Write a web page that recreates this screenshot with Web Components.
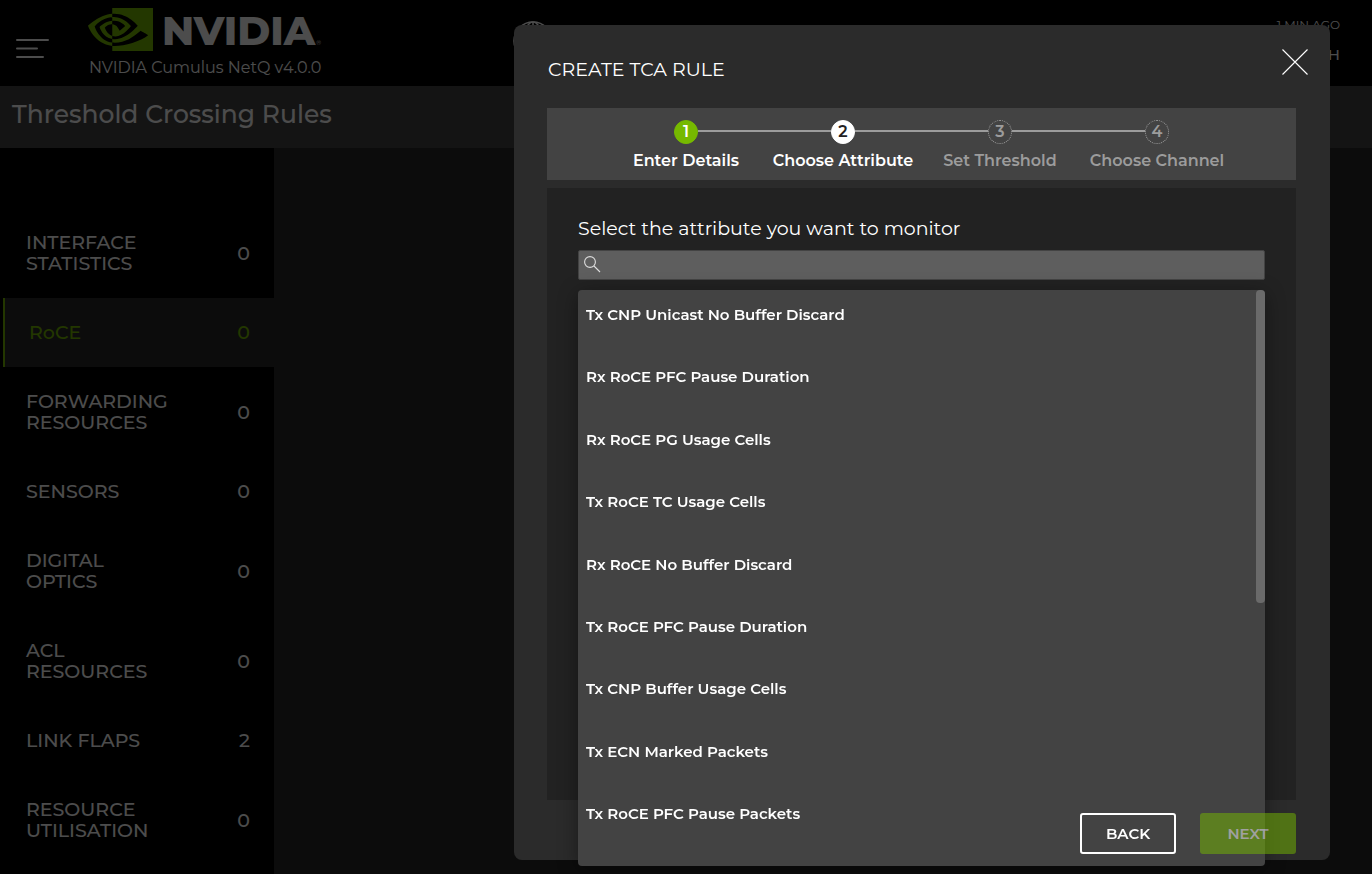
<!DOCTYPE html>
<html lang="en">
<head>
<meta charset="utf-8">
<title>NetQ - Threshold Crossing Rules</title>
<style>
html, body { height: 100%; margin: 0; }
body { background: #2b2b2b; color: #fff; font-family: Montserrat, Inter, sans-serif; overflow: hidden; }
</style>
</head>
<body>
<netq-app></netq-app>
<script>
const define = (name, html) => customElements.define(name, class extends HTMLElement {
  constructor() {
    super();
    this.attachShadow({ mode: 'open' });
  }
  connectedCallback() {
    if (this.shadowRoot.childNodes.length) return;
    this.shadowRoot.innerHTML = '<style>*{box-sizing:border-box}:host{box-sizing:border-box}</style>' + (typeof html === 'function' ? html(this) : html);
  }
});

define('netq-logo', `
<style>
:host { display: block; }
.mark { display: flex; align-items: center; gap: 9px; height: 43px; }
svg { width: 65px; height: 43px; flex: none; }
.word { font-size: 40px; line-height: 45px; font-weight: 800; padding-top: 1px; }
sup { font-size: 6px; font-weight: 400; line-height: 6px; align-self: flex-end; margin: 0 0 5px -8px; }
p { margin: 7px 0 0 1px; font-size: 16px; line-height: 20px; font-weight: 400; white-space: nowrap; }
</style>
<div class="mark">
<svg viewBox="0 4.063 24 15.874" preserveAspectRatio="none" fill="#76b900" aria-hidden="true"><path d="M8.948 8.798v-1.43a6.7 6.7 0 0 1 .424-.018c3.922-.124 6.493 3.374 6.493 3.374s-2.774 3.851-5.75 3.851c-.398 0-.787-.062-1.158-.185v-4.346c1.528.185 1.837.857 2.747 2.385l2.04-1.714s-1.492-1.952-4-1.952a6.016 6.016 0 0 0-.796.035m0-4.735v2.138l.424-.027c5.45-.185 9.01 4.47 9.01 4.47s-4.08 4.964-8.33 4.964c-.37 0-.733-.035-1.095-.097v1.325c.3.035.61.062.91.062 3.957 0 6.82-2.023 9.593-4.408.459.371 2.34 1.263 2.73 1.652-2.633 2.208-8.772 3.984-12.253 3.984-.335 0-.653-.018-.971-.053v1.864H24V4.063zm0 10.326v1.131c-3.657-.654-4.673-4.46-4.673-4.46s1.758-1.944 4.673-2.262v1.237H8.94c-1.528-.186-2.73 1.245-2.73 1.245s.68 2.412 2.739 3.11M2.456 10.9s2.164-3.197 6.5-3.533V6.201C4.153 6.59 0 10.653 0 10.653s2.35 6.802 8.948 7.42v-1.237c-4.84-.6-6.492-5.936-6.492-5.936z"/></svg>
<span class="word">NVIDIA</span><sup>®</sup>
</div>
<p><slot></slot></p>`);

define('netq-header', `
<style>
:host { display: flex; height: 86px; padding: 8px 32px 0 16px; background: #000; }
button { background: none; border: 0; padding: 0; margin: 0; color: inherit; font: inherit; }
.menu { width: 33px; height: 24px; margin: 28px 39px 0 0; }
svg { display: block; }
netq-logo { width: 232px; flex: none; }
.globe { margin: 13px 0 0 193px; flex: none; }
.status { margin-left: auto; display: flex; flex-direction: column; align-items: flex-end; }
.ago { font-size: 12px; line-height: 16px; font-weight: 400; margin-top: 9px; }
.status button { font-size: 15px; line-height: 20px; font-weight: 500; margin-top: 12px; }
</style>
<button class="menu" aria-label="Menu"><svg width="33" height="24" stroke="#fff" stroke-width="2" stroke-linecap="round"><path d="M1 4H32M1 12.500H21M1 21H27"/></svg></button>
<netq-logo>NVIDIA Cumulus NetQ v4.0.0</netq-logo>
<svg class="globe" width="40" height="40" fill="none" stroke="#fff" stroke-width="1.500" aria-hidden="true"><circle cx="20" cy="20" r="19"/><ellipse cx="20" cy="20" rx="9" ry="19"/><path d="M20 1V39M1 20H39M5 9C14 13 26 13 35 9M5 31C14 27 26 27 35 31"/></svg>
<div class="status"><span class="ago">1 MIN AGO</span><button>H</button></div>`);

define('netq-nav-item', host => `
<style>
:host { display: block; }
a { display: flex; align-items: center; justify-content: space-between; padding: 24px 24px 24px 26px; color: #fff; text-decoration: none; font-size: 19px; line-height: 21px; font-weight: 500; }
:host([active]) a { margin-left: 3px; padding-left: 24px; border-left: 2px solid #76b900; background: #2b2b2b; color: #76b900; }
</style>
<a href="#"><span><slot></slot></span><span>${host.getAttribute('count')}</span></a>`);

define('netq-sidebar', `
<style>:host { display: block; width: 274px; flex: none; padding-top: 60px; background: #000; }</style>
<nav aria-label="Rule categories">
<netq-nav-item count="0">INTERFACE<br>STATISTICS</netq-nav-item>
<netq-nav-item count="0" active>RoCE</netq-nav-item>
<netq-nav-item count="0">FORWARDING<br>RESOURCES</netq-nav-item>
<netq-nav-item count="0">SENSORS</netq-nav-item>
<netq-nav-item count="0">DIGITAL<br>OPTICS</netq-nav-item>
<netq-nav-item count="0">ACL<br>RESOURCES</netq-nav-item>
<netq-nav-item count="2">LINK FLAPS</netq-nav-item>
<netq-nav-item count="0">RESOURCE<br>UTILISATION</netq-nav-item>
</nav>`);

define('tca-step', host => `
<style>
:host { display: flex; flex-direction: column; align-items: center; flex: 1; color: #9c9c9c; font-weight: 600; white-space: nowrap; }
.track { display: flex; width: 100%; align-items: center; }
.track::before, .track::after { content: ""; flex: 1; height: 2px; margin-bottom: 2px; background: #9c9c9c; }
:host(:first-of-type) .track::before, :host(:last-of-type) .track::after { visibility: hidden; }
.dot { width: 24px; height: 24px; border-radius: 50%; border: 1px dotted #9c9c9c; display: grid; place-items: center; font-size: 16px; line-height: 22px; }
.label { margin-top: 7px; font-size: 16px; line-height: 20px; }
:host([state]) { color: #fff; }
:host([state=done]) .dot { background: #76b900; border-color: #76b900; border-style: solid; }
:host([state=current]) .dot { background: #fff; border-color: #fff; border-style: solid; color: #222; }
</style>
<div class="track"><span class="dot">${host.getAttribute('number')}</span></div>
<span class="label"><slot></slot></span>`);

define('tca-stepper', `
<style>
:host { display: flex; justify-content: center; height: 72px; padding-top: 12px; background: #434343; flex: none; }
.steps { display: flex; width: 628px; }
</style>
<div class="steps">
<tca-step number="1" state="done">Enter Details</tca-step>
<tca-step number="2" state="current">Choose Attribute</tca-step>
<tca-step number="3">Set Threshold</tca-step>
<tca-step number="4">Choose Channel</tca-step>
</div>`);

define('attribute-picker', `
<style>
:host { display: block; position: relative; }
label { display: block; font-size: 19px; line-height: 24px; padding-top: 1px; margin-bottom: 9px; }
.field { display: flex; align-items: center; gap: 6px; height: 30px; padding: 0 5px 2px; border: 1px solid #434343; border-radius: 2px; background: #5e5e5e; }
input { flex: 1; min-width: 0; border: 0; outline: 0; padding: 0; background: none; color: #fff; font: 500 15px/20px Montserrat, Inter, sans-serif; }
.menu { position: absolute; top: 74px; left: 0; right: 0; height: 576px; border-radius: 4px; background: #434343; box-shadow: 0 4px 20px rgba(0,0,0,.4); }
ul { list-style: none; margin: 0; padding: 16px 8px 43px; height: 100%; display: flex; flex-direction: column; justify-content: space-between; }
li { font-size: 15px; line-height: 18px; font-weight: 600; }
.thumb { position: absolute; top: 0; right: 0; width: 9px; height: 313px; border-radius: 4px; background: #6a6a6a; }
</style>
<label for="q">Select the attribute you want to monitor</label>
<div class="field"><svg width="17" height="17" fill="none" stroke="#ddd" stroke-width="1.100" aria-hidden="true"><circle cx="6" cy="6" r="5.400"/><path d="M10 10L16 16"/></svg><input id="q" type="text" aria-controls="list"></div>
<div class="menu">
<ul id="list" role="listbox" aria-label="Attributes">
<li role="option">Tx CNP Unicast No Buffer Discard</li>
<li role="option">Rx RoCE PFC Pause Duration</li>
<li role="option">Rx RoCE PG Usage Cells</li>
<li role="option">Tx RoCE TC Usage Cells</li>
<li role="option">Rx RoCE No Buffer Discard</li>
<li role="option">Tx RoCE PFC Pause Duration</li>
<li role="option">Tx CNP Buffer Usage Cells</li>
<li role="option">Tx ECN Marked Packets</li>
<li role="option">Tx RoCE PFC Pause Packets</li>
</ul>
<span class="thumb"></span>
</div>`);

define('netq-button', host => `
<style>
:host { display: block; }
button { min-width: 96px; height: 41px; padding: 0 16px; border: 2px solid #fff; border-radius: 3px; background: none; color: #fff; font: 600 15px/20px Montserrat, Inter, sans-serif; }
:host([primary]) button { background: #76b900; border-color: #76b900; }
button:disabled { opacity: .5; }
</style>
<button type="button" ${host.hasAttribute('disabled') ? 'disabled' : ''}><slot></slot></button>`);

define('tca-dialog', `
<style>
:host { display: flex; flex-direction: column; width: 816px; max-width: calc(100% - 84px); height: calc(100% - 39px); margin: 25px 42px 0 0; padding: 0 34px 6px 33px; border-radius: 8px; background: #2b2b2b; }
header { display: flex; justify-content: space-between; height: 83px; padding: 22px 0 0 1px; flex: none; }
h2 { margin: 11px 0 0; font-size: 19px; line-height: 24px; font-weight: 400; }
.close { width: 30px; height: 30px; margin: 0 -14px 0 0; padding: 1px 2px; border: 0; background: none; }
svg { display: block; }
.panel { flex: 1; margin-top: 8px; padding: 28px 31px 0; background: #222; }
footer { position: relative; z-index: 1; display: flex; justify-content: flex-end; gap: 24px; margin-top: 13px; }
</style>
<header><h2>CREATE TCA RULE</h2><button class="close" aria-label="Close"><svg width="26" height="26" stroke="#fff" stroke-width="1.100"><path d="M.5.5L25.500 25.500M25.500.5L.5 25.500"/></svg></button></header>
<tca-stepper></tca-stepper>
<section class="panel"><attribute-picker></attribute-picker></section>
<footer><netq-button>BACK</netq-button><netq-button primary disabled>NEXT</netq-button></footer>`);

define('netq-app', `
<style>
:host { display: flex; flex-direction: column; height: 100%; }
h1 { margin: 0; height: 62px; padding: 12px; flex: none; background: #434343; font-size: 25px; line-height: 32px; font-weight: 500; }
.main { display: flex; flex: 1; min-height: 0; background: #2b2b2b; }
.overlay { position: fixed; inset: 0; display: flex; justify-content: flex-end; background: rgba(0,0,0,.7); }
</style>
<netq-header></netq-header>
<h1>Threshold Crossing Rules</h1>
<div class="main"><netq-sidebar></netq-sidebar></div>
<div class="overlay"><tca-dialog role="dialog" aria-label="Create TCA rule"></tca-dialog></div>`);
</script>
</body>
</html>
